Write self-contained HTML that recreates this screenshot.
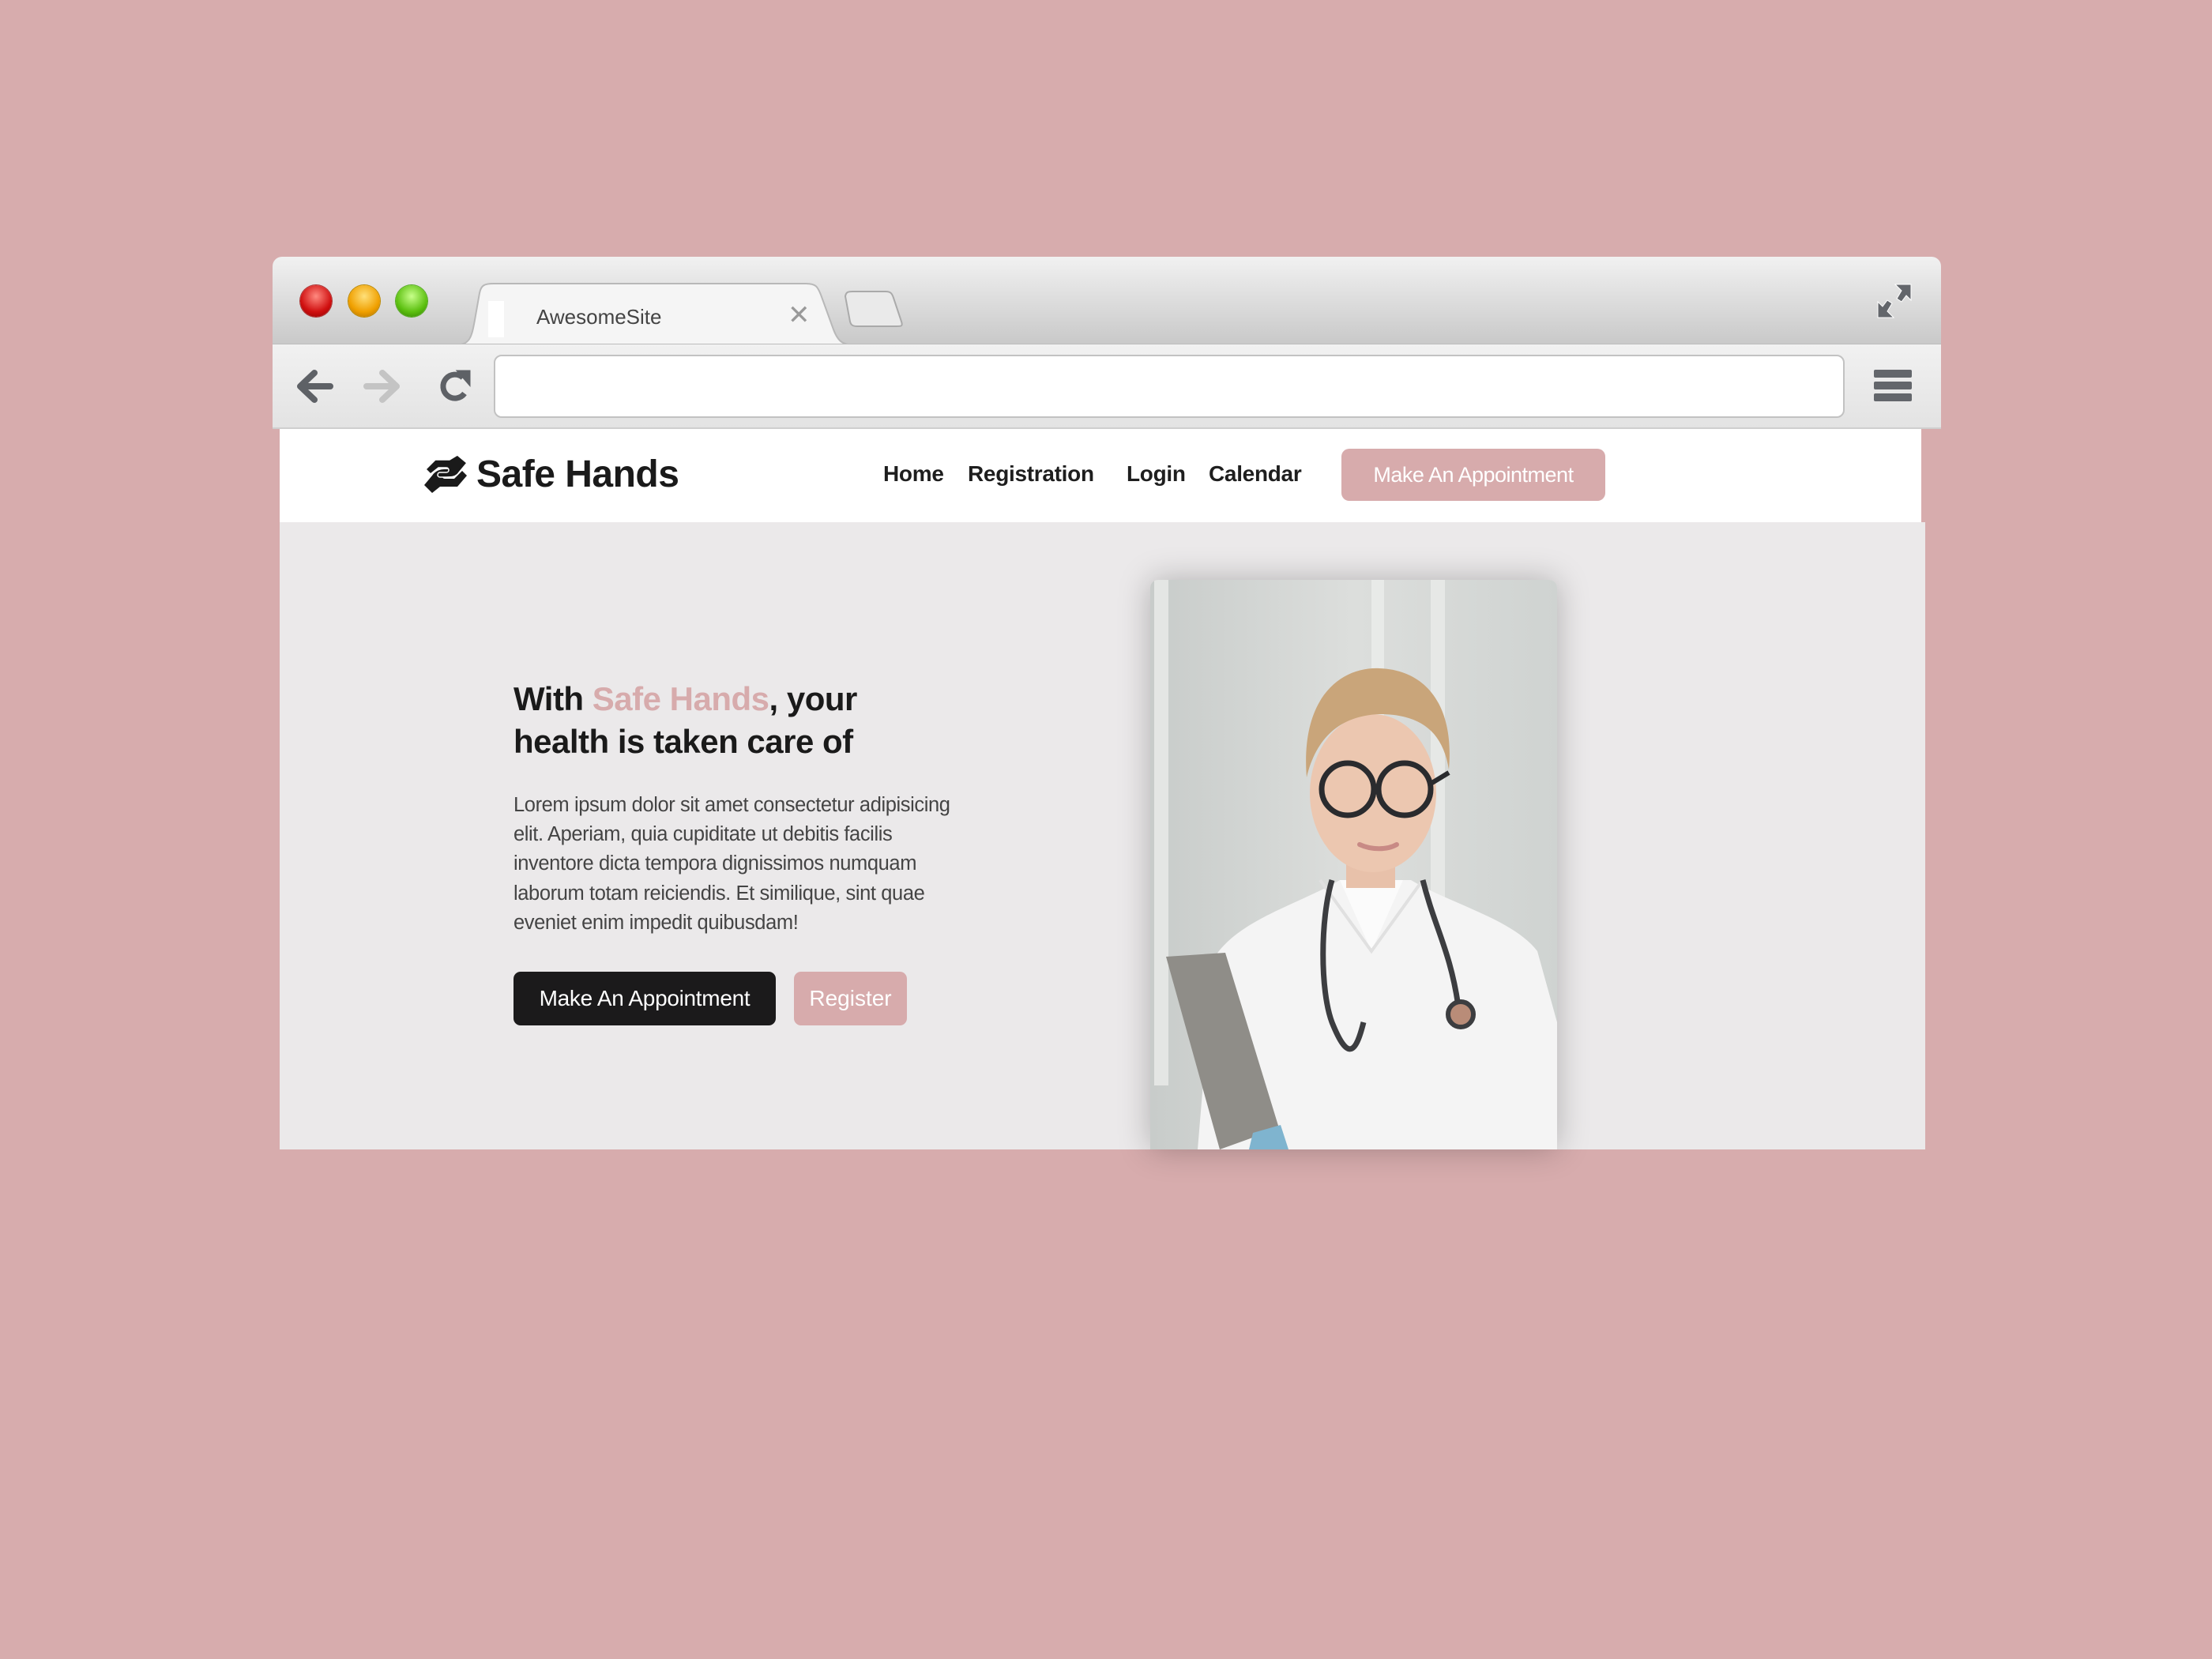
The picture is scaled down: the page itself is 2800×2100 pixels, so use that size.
<!DOCTYPE html>
<html><head><meta charset="utf-8"><style>
*{margin:0;padding:0;box-sizing:border-box}
body{width:2800px;height:2100px;background:#d7acad;position:relative;overflow:hidden;font-family:"Liberation Sans",sans-serif}
.abs{position:absolute}
.win{left:345px;top:325px;width:2112px;height:220px;border-radius:12px 12px 0 0;overflow:hidden}
.title{left:0;top:0;width:2112px;height:110px;background:linear-gradient(#f1f1f1,#c9c9c9)}
.tool{left:0;top:110px;width:2112px;height:108px;background:linear-gradient(#f1f1f1,#e3e3e3);border-top:1px solid #bcbcbc;border-bottom:2px solid #cfcfcf}
.dot{width:40px;height:40px;border-radius:50%;top:36px}
.nav a{position:absolute;top:584px;font-weight:bold;font-size:28px;color:#1e1e1e;letter-spacing:-0.3px}
</style></head><body>
<div class="abs win">
  <div class="abs title"></div>
  <div class="abs dot" style="left:35px;background:radial-gradient(circle at 50% 35%,#ff8a80,#d01010 60%,#8a0000);box-shadow:0 0 0 1px #a33"></div>
  <div class="abs dot" style="left:96px;background:radial-gradient(circle at 50% 35%,#ffe07a,#f0a000 60%,#a86a00);box-shadow:0 0 0 1px #b80"></div>
  <div class="abs dot" style="left:156px;background:radial-gradient(circle at 50% 35%,#c8ff8a,#5cc010 60%,#2e7a00);box-shadow:0 0 0 1px #5a2"></div>
  <svg class="abs" style="left:220px;top:30px" width="600" height="82"><path d="M10 82 C30 82 32 72 36 50 L42 16 C44 6 48 4 60 4 L455 4 C468 4 470 8 474 18 L490 62 C496 78 502 82 520 82 Z" fill="#f5f5f5" stroke="#b8b8b8" stroke-width="2"/><path d="M505 20 C506 15 508 14 514 14 L556 14 C562 14 564 16 566 22 L576 52 C578 58 576 58 570 58 L520 58 C514 58 512 56 511 52 Z" fill="#eaeaea" stroke="#aaa" stroke-width="2"/></svg>
  <div class="abs" style="left:273px;top:56px;width:20px;height:46px;background:#fff"></div>
  <div class="abs" style="left:334px;top:61px;font-size:26px;color:#444">AwesomeSite</div>
  <div class="abs" style="left:652px;top:54px;font-size:34px;color:#999">✕</div>
  <svg class="abs" style="left:2030px;top:33px" width="46" height="46" viewBox="0 0 46 46"><path d="M24 2 L44 2 L44 22 L38 16 L32 24 L26 20 L32 10 Z M2 44 L2 24 L8 30 L14 22 L20 26 L14 36 L22 44 Z" fill="#63666b" stroke="#fff" stroke-width="1"/></svg>
  <div class="abs tool"></div>
  <svg class="abs" style="left:31px;top:143px" width="240" height="42" viewBox="0 0 240 42"><path d="M22 4 L4 21 L22 38 M6 21 L42 21" stroke="#5e6166" stroke-width="8" fill="none" stroke-linecap="round" stroke-linejoin="round"/><path d="M108 4 L126 21 L108 38 M88 21 L124 21" stroke="#c4c4c4" stroke-width="8" fill="none" stroke-linecap="round" stroke-linejoin="round"/><path d="M212 30 A15 15 0 1 1 210 10" stroke="#5e6166" stroke-width="7" fill="none"/><path d="M204 2 L218 2 L218 18 Z" fill="#5e6166" stroke="#5e6166" stroke-width="3"/></svg>
  <div class="abs" style="left:280px;top:124px;width:1710px;height:80px;background:#fff;border:2px solid #c2c2c2;border-radius:10px"></div>
  <div class="abs" style="left:2027px;top:143px;width:48px;height:10px;background:#63666b;border-radius:2px"></div>
  <div class="abs" style="left:2027px;top:158px;width:48px;height:10px;background:#63666b;border-radius:2px"></div>
  <div class="abs" style="left:2027px;top:173px;width:48px;height:10px;background:#63666b;border-radius:2px"></div>
</div>
<div class="abs" style="left:354px;top:543px;width:2078px;height:118px;background:#fff"></div>
<div class="abs" style="left:354px;top:661px;width:2083px;height:794px;background:#ebe9ea"></div>
<svg class="abs" style="left:533px;top:574px" width="62" height="52" viewBox="0 0 62 52"><path d="M4 40 L14 28 C18 22 24 20 30 20 L40 20 C44 20 44 26 40 26 L30 26 C26 26 26 32 30 32 L42 32 L52 22 L58 28 L46 42 L24 42 L14 50 Z" fill="#1a1a1a"/><path d="M58 12 L48 24 C44 30 38 30 32 30 L24 30 C20 30 20 24 24 24 L32 24 C36 24 36 18 32 18 L22 18 L12 26 L6 20 L18 8 L36 8 L46 2 Z" fill="#1a1a1a" stroke="#fff" stroke-width="1.5"/></svg>
<div class="abs" style="left:603px;top:573px;font-size:48px;font-weight:bold;color:#1a1a1a;letter-spacing:-0.5px">Safe Hands</div>
<div class="nav">
<a style="left:1118px">Home</a><a style="left:1225px">Registration</a><a style="left:1426px">Login</a><a style="left:1530px">Calendar</a>
</div>
<div class="abs" style="left:1698px;top:568px;width:334px;height:66px;background:#d7abac;border-radius:10px;color:#fff;font-size:27px;line-height:66px;text-align:center;letter-spacing:-0.5px">Make An Appointment</div>
<div class="abs" style="left:650px;top:858px;font-size:42px;line-height:54px;color:#1a1a1a;font-weight:bold;letter-spacing:-0.5px">With <span style="color:#d7abac">Safe Hands</span>, your<br>health is taken care of</div>
<div class="abs" style="left:650px;top:1001px;width:572px;font-size:25.5px;line-height:37.2px;color:#444;letter-spacing:-0.4px">Lorem ipsum dolor sit amet consectetur adipisicing elit. Aperiam, quia cupiditate ut debitis facilis inventore dicta tempora dignissimos numquam laborum totam reiciendis. Et similique, sint quae eveniet enim impedit quibusdam!</div>
<div class="abs" style="left:650px;top:1230px;width:332px;height:68px;background:#1b1a1b;border-radius:9px;color:#fff;font-size:28px;line-height:68px;text-align:center;letter-spacing:-0.3px">Make An Appointment</div>
<div class="abs" style="left:1005px;top:1230px;width:143px;height:68px;background:#d7abac;border-radius:9px;color:#fff;font-size:28px;line-height:68px;text-align:center">Register</div>
<div class="abs" style="left:1456px;top:734px;width:515px;height:721px;border-radius:10px 10px 0 0;overflow:hidden;box-shadow:0 0 40px rgba(0,0,0,0.25)">
<svg width="515" height="721" viewBox="0 0 515 721">
<defs><linearGradient id="bg" x1="0" x2="1"><stop offset="0" stop-color="#c8ccca"/><stop offset="0.5" stop-color="#dcdedc"/><stop offset="1" stop-color="#cfd3d1"/></linearGradient></defs>
<rect width="515" height="721" fill="url(#bg)"/>
<rect x="5" y="0" width="18" height="640" fill="#e4e6e4"/>
<rect x="280" y="0" width="16" height="420" fill="#e8eae8"/>
<rect x="355" y="0" width="18" height="420" fill="#e6e8e6"/>
<path d="M60 721 L80 480 C110 430 190 410 240 380 L330 380 C380 410 460 430 490 470 L515 560 L515 721 Z" fill="#f4f4f4"/>
<path d="M240 380 L280 470 L320 380 Z" fill="#fbfbfb"/>
<path d="M215 380 L280 470 L345 380" stroke="#e0e0e0" stroke-width="4" fill="none"/>
<rect x="248" y="330" width="62" height="60" fill="#e8c1aa"/>
<ellipse cx="282" cy="270" rx="80" ry="100" fill="#ecc7b0"/>
<path d="M198 250 C190 150 240 110 290 112 C350 114 385 160 378 240 C370 190 340 170 290 170 C240 172 210 200 198 250 Z" fill="#c9a57a"/>
<circle cx="250" cy="265" r="33" fill="none" stroke="#2a2b2e" stroke-width="7"/>
<circle cx="322" cy="265" r="33" fill="none" stroke="#2a2b2e" stroke-width="7"/>
<path d="M283 262 L289 262 M355 258 L378 244" stroke="#2a2b2e" stroke-width="6"/>
<path d="M265 335 C280 342 300 342 312 335" stroke="#c88a85" stroke-width="6" fill="none" stroke-linecap="round"/>
<path d="M230 380 C215 430 215 520 230 560 C250 610 260 600 270 560 M345 380 C360 440 380 470 390 540" stroke="#3c3d40" stroke-width="7" fill="none"/>
<circle cx="393" cy="550" r="16" fill="#b98c78" stroke="#3c3d40" stroke-width="6"/>
<path d="M20 477 L95 472 L163 694 L88 721 Z" fill="#8f8d88"/>
<path d="M130 700 L165 690 L175 721 L125 721 Z" fill="#7fb4cf"/>
</svg></div>
</body></html>
